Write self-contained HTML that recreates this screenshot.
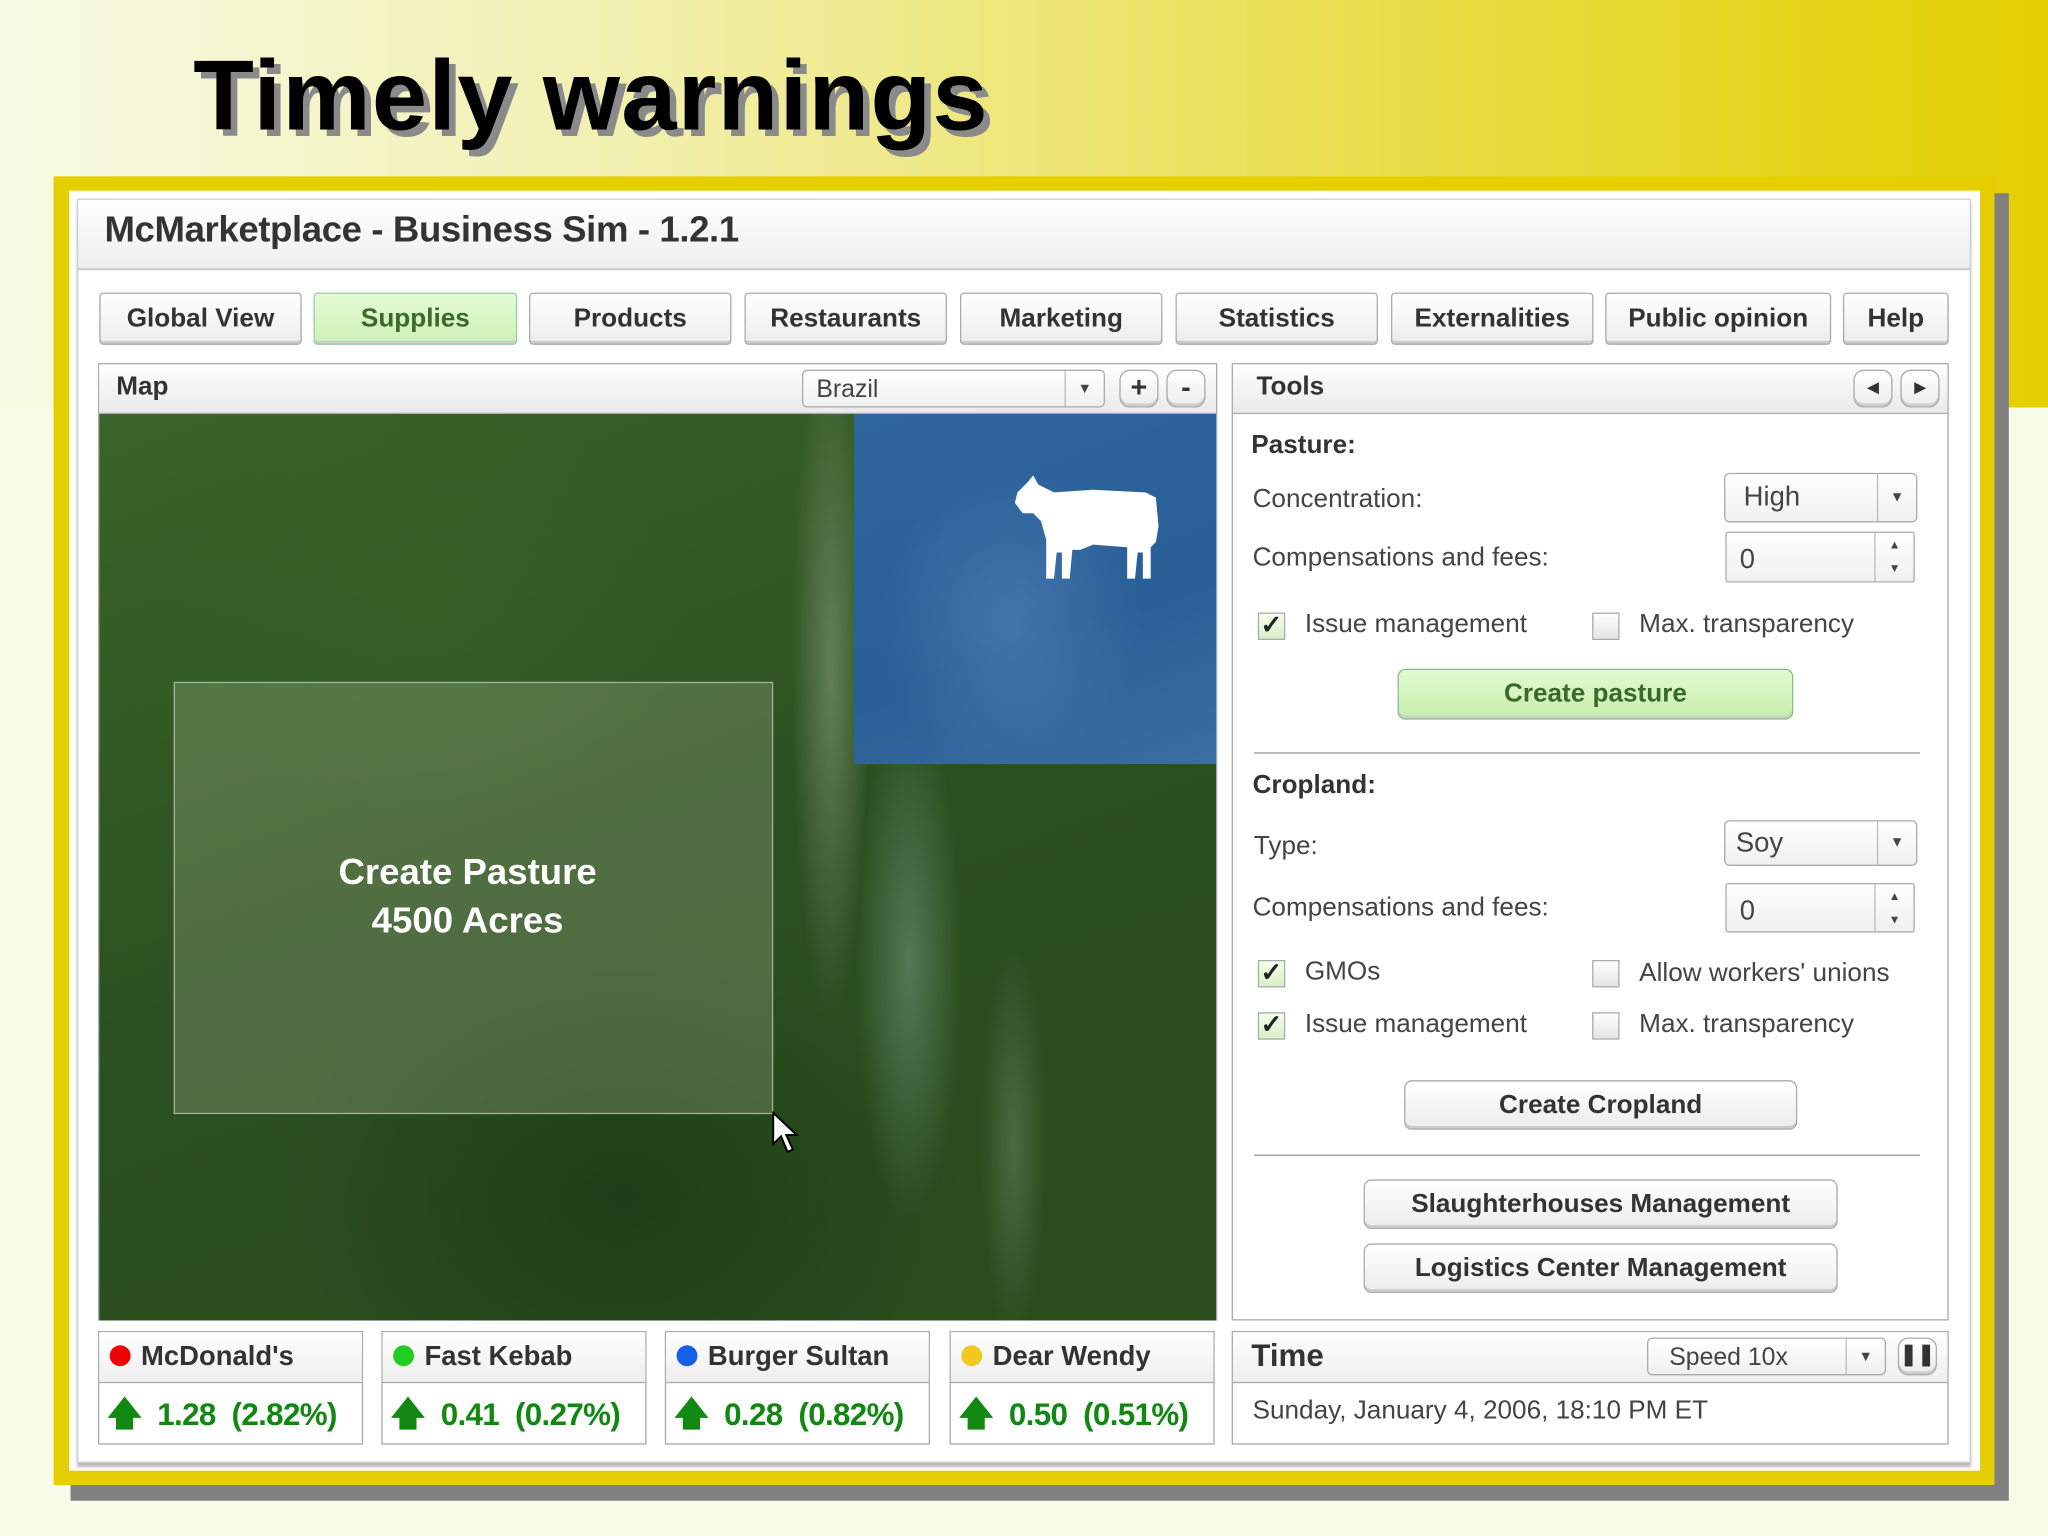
<!DOCTYPE html>
<html><head><meta charset="utf-8">
<style>
*{margin:0;padding:0;box-sizing:border-box}
html,body{width:2048px;height:1536px;overflow:hidden;background:#f7fbe8}
#s{position:absolute;left:0;top:0;width:1568px;height:1176px;transform:scale(1.306122);transform-origin:0 0;font-family:"Liberation Sans",sans-serif;color:#333}
.a{position:absolute}
.top{left:0;top:0;width:1568px;height:312px;background:linear-gradient(90deg,#f6fbe4 0%,#f2f0b0 30%,#e9df50 65%,#e4cf00 100%)}
.title{left:148px;top:30px;font-size:76px;font-weight:bold;color:#000;text-shadow:5px 5px 0 #8a8a8a;letter-spacing:1px}
.btn{position:absolute;border:1px solid #aaa;border-radius:3px;background:linear-gradient(#fff,#ececec);box-shadow:inset 0 -2px 0 #ccc;text-align:center;font-weight:bold;font-size:20px;color:#333}
.pan{position:absolute;border:1px solid #aaa;background:#fff}
.ph{position:absolute;left:0;right:0;top:0;height:38px;background:linear-gradient(#fff,#eaeaea);border-bottom:1px solid #aaa}
.lb{position:absolute;font-size:20px;color:#444}
.cb{position:absolute;width:21px;height:21px;border:1px solid #aaa;background:linear-gradient(#fff,#e4e4e4);font-size:20px;line-height:19px;text-align:center;color:#222;font-weight:bold}
.cb.on{background:linear-gradient(#f4ffe8,#d9efc8)}
.sel{position:absolute;border:1px solid #aaa;border-radius:4px;background:linear-gradient(#fff,#f0f0f0);font-size:21px;color:#444}
.sel span.ar{position:absolute;right:0;top:0;bottom:0;width:30px;border-left:1px solid #bbb;font-size:11px;text-align:center}
.co{position:absolute;top:1019px;height:87px;border:1px solid #aaa;background:#fff}
.co .h{height:39px;border-bottom:1px solid #aaa;background:linear-gradient(#fff,#eee);font-size:21px;font-weight:bold;color:#333;line-height:37px;padding-left:8px}
.co .v{font-size:24px;color:#118811;line-height:46px;padding-left:6px;font-weight:bold;white-space:nowrap;letter-spacing:-0.5px;word-spacing:6px}
.dot{display:inline-block;width:16px;height:16px;border-radius:50%;vertical-align:-1px;margin-right:8px}
</style></head><body><div id="s">
<div class="a top"></div>
<div class="a title">Timely warnings</div>
<div class="a" style="left:54px;top:148px;width:1484px;height:1001px;background:#808080"></div>
<div class="a" style="left:41px;top:135px;width:1486px;height:1002px;background:#e6cf00"></div>
<div class="a" style="left:53px;top:146px;width:1463px;height:980px;background:#fff"></div>
<div class="a" style="left:59px;top:152px;width:1450px;height:968px;border:1px solid #ccc;background:#fff;box-shadow:0 3px 2px #bbb"></div>
<div class="a" style="left:60px;top:153px;width:1448px;height:54px;background:linear-gradient(#fff,#eee);border-bottom:2px solid #ccc"></div>
<div class="a" style="left:80px;top:160px;font-size:28px;color:#333;font-weight:bold;letter-spacing:-0.3px">McMarketplace - Business Sim - 1.2.1</div>

<div class="btn" style="left:76px;top:224px;width:155px;height:40px;line-height:38px">Global View</div>
<div class="btn" style="left:240px;top:224px;width:156px;height:40px;line-height:38px;background:linear-gradient(#e6fbd8,#cdf0b4);border-color:#9c9;color:#3a6a2a">Supplies</div>
<div class="btn" style="left:405px;top:224px;width:155px;height:40px;line-height:38px">Products</div>
<div class="btn" style="left:570px;top:224px;width:155px;height:40px;line-height:38px">Restaurants</div>
<div class="btn" style="left:735px;top:224px;width:155px;height:40px;line-height:38px">Marketing</div>
<div class="btn" style="left:900px;top:224px;width:155px;height:40px;line-height:38px">Statistics</div>
<div class="btn" style="left:1065px;top:224px;width:155px;height:40px;line-height:38px">Externalities</div>
<div class="btn" style="left:1229px;top:224px;width:173px;height:40px;line-height:38px">Public opinion</div>
<div class="btn" style="left:1411px;top:224px;width:81px;height:40px;line-height:38px">Help</div>

<!-- Map panel -->
<div class="pan" style="left:75px;top:278px;width:857px;height:733px">
 <div class="ph"></div>
 <div class="a" style="left:13px;top:6px;font-size:20px;font-weight:bold">Map</div>
 <div class="sel" style="left:538px;top:4px;width:232px;height:29px;line-height:29px;padding-left:10px;font-size:19px">Brazil<span class="ar">▼</span></div>
 <div class="btn" style="left:781px;top:4px;width:30px;height:29px;line-height:26px;border-radius:8px;font-size:22px">+</div>
 <div class="btn" style="left:817px;top:4px;width:30px;height:29px;line-height:26px;border-radius:8px;font-size:22px">-</div>
 <div class="a" style="left:0;top:38px;width:855px;height:694px;background:
  radial-gradient(ellipse 30px 260px at 560px 200px,rgba(150,170,140,.5),transparent),
  radial-gradient(ellipse 40px 200px at 620px 420px,rgba(130,170,150,.45),transparent),
  radial-gradient(ellipse 25px 150px at 700px 560px,rgba(120,150,120,.4),transparent),
  radial-gradient(ellipse 200px 160px at 250px 150px,rgba(60,100,40,.5),transparent),
  radial-gradient(ellipse 260px 200px at 400px 600px,rgba(20,45,15,.5),transparent),
  linear-gradient(160deg,#3a6429,#2b5020 50%,#294c1c);"></div>
 <div class="a" style="left:578px;top:38px;width:277px;height:268px;background:radial-gradient(ellipse 100px 120px at 120px 160px,rgba(90,140,190,.5),transparent),linear-gradient(160deg,#2e66a0,#2a5e96 60%,#3a6ea4)"></div>
 <svg class="a" style="left:701px;top:84px" width="112" height="82" viewBox="0 0 112 82"><path fill="#fff" d="M2 14 L10 6 L14 1 L18 8 L30 14 L60 12 L100 14 L108 18 L110 40 L108 52 L104 56 L104 80 L98 80 L98 60 L94 60 L92 80 L86 80 L86 56 L60 54 L50 58 L44 58 L42 80 L36 80 L36 60 L32 60 L30 80 L24 80 L24 50 L20 36 L14 30 L6 30 L0 22Z"/></svg>
 <div class="a" style="left:57px;top:243px;width:459px;height:331px;background:rgba(175,185,150,.28);border:1px solid rgba(220,225,210,.6)"></div>
 <div class="a" style="left:57px;top:370px;width:450px;text-align:center;color:#fff;font-size:28px;font-weight:bold;line-height:37px">Create Pasture<br>4500 Acres</div>
 <svg class="a" style="left:515px;top:572px" width="22" height="34" viewBox="0 0 22 34"><path d="M1 1 L1 25 L7 19 L12 31 L16 29 L11 18 L19 18Z" fill="#fff" stroke="#000" stroke-width="1.5"/></svg>
</div>

<!-- Tools -->
<div class="pan" style="left:943px;top:278px;width:549px;height:733px">
 <div class="ph"></div>
 <div class="a" style="left:18px;top:6px;font-size:20px;font-weight:bold">Tools</div>
 <div class="btn" style="left:475px;top:4px;width:30px;height:29px;line-height:27px;border-radius:8px;font-size:11px">◀</div>
 <div class="btn" style="left:511px;top:4px;width:30px;height:29px;line-height:27px;border-radius:8px;font-size:11px">▶</div>
</div>
<div class="lb" style="left:958px;top:330px;font-weight:bold;color:#333">Pasture:</div>
<div class="lb" style="left:959px;top:371px">Concentration:</div>
<div class="sel" style="left:1320px;top:362px;width:148px;height:38px;line-height:36px;padding-left:14px">High<span class="ar" style="line-height:36px">▼</span></div>
<div class="lb" style="left:959px;top:416px">Compensations and fees:</div>
<div class="sel" style="left:1321px;top:407px;width:145px;height:39px;line-height:42px;padding-left:10px;border-radius:2px">0<span class="ar" style="font-size:9px;line-height:18px">▲<br>▼</span></div>
<div class="cb on" style="left:963px;top:469px">✓</div><div class="lb" style="left:999px;top:467px">Issue management</div>
<div class="cb" style="left:1219px;top:469px"></div><div class="lb" style="left:1255px;top:467px">Max. transparency</div>
<div class="btn" style="left:1070px;top:512px;width:303px;height:39px;line-height:37px;border-radius:6px;background:linear-gradient(#e2fad2,#c6eeaa);border-color:#8b8;color:#3a6a2a">Create pasture</div>
<div class="a" style="left:960px;top:576px;width:510px;height:1px;background:#999"></div>
<div class="lb" style="left:959px;top:590px;font-weight:bold;color:#333">Cropland:</div>
<div class="lb" style="left:960px;top:637px">Type:</div>
<div class="sel" style="left:1320px;top:628px;width:148px;height:35px;line-height:33px;padding-left:8px">Soy<span class="ar" style="line-height:33px">▼</span></div>
<div class="lb" style="left:959px;top:684px">Compensations and fees:</div>
<div class="sel" style="left:1321px;top:676px;width:145px;height:38px;line-height:42px;padding-left:10px;border-radius:2px">0<span class="ar" style="font-size:9px;line-height:18px">▲<br>▼</span></div>
<div class="cb on" style="left:963px;top:735px">✓</div><div class="lb" style="left:999px;top:733px">GMOs</div>
<div class="cb" style="left:1219px;top:735px"></div><div class="lb" style="left:1255px;top:734px">Allow workers' unions</div>
<div class="cb on" style="left:963px;top:775px">✓</div><div class="lb" style="left:999px;top:773px">Issue management</div>
<div class="cb" style="left:1219px;top:775px"></div><div class="lb" style="left:1255px;top:773px">Max. transparency</div>
<div class="btn" style="left:1075px;top:827px;width:301px;height:38px;line-height:36px;border-radius:6px">Create Cropland</div>
<div class="a" style="left:960px;top:884px;width:510px;height:1px;background:#999"></div>
<div class="btn" style="left:1044px;top:903px;width:363px;height:38px;line-height:36px;border-radius:6px">Slaughterhouses Management</div>
<div class="btn" style="left:1044px;top:952px;width:363px;height:38px;line-height:36px;border-radius:6px">Logistics Center Management</div>

<!-- bottom -->
<div class="co" style="left:75px;width:203px"><div class="h"><span class="dot" style="background:#e00"></span>McDonald's</div><div class="v"><b style="font-size:26px">🡅</b> 1.28 (2.82%)</div></div>
<div class="co" style="left:292px;width:203px"><div class="h"><span class="dot" style="background:#2c2"></span>Fast Kebab</div><div class="v"><b style="font-size:26px">🡅</b> 0.41 (0.27%)</div></div>
<div class="co" style="left:509px;width:203px"><div class="h"><span class="dot" style="background:#1560e8"></span>Burger Sultan</div><div class="v"><b style="font-size:26px">🡅</b> 0.28 (0.82%)</div></div>
<div class="co" style="left:727px;width:203px"><div class="h"><span class="dot" style="background:#f0c820"></span>Dear Wendy</div><div class="v"><b style="font-size:26px">🡅</b> 0.50 (0.51%)</div></div>
<div class="co" style="left:943px;width:549px"><div class="h" style="font-size:24px;padding-left:14px">Time</div><div class="v" style="color:#444;font-weight:normal;font-size:20px;padding-left:15px;line-height:42px;letter-spacing:0;word-spacing:0">Sunday, January 4, 2006, 18:10 PM ET</div></div>
<div class="sel" style="left:1261px;top:1024px;width:183px;height:29px;line-height:29px;padding-left:16px;font-size:19px">Speed 10x<span class="ar">▼</span></div>
<div class="btn" style="left:1453px;top:1024px;width:30px;height:29px;line-height:26px;border-radius:8px;font-size:16px">❚❚</div>
</div></body></html>
